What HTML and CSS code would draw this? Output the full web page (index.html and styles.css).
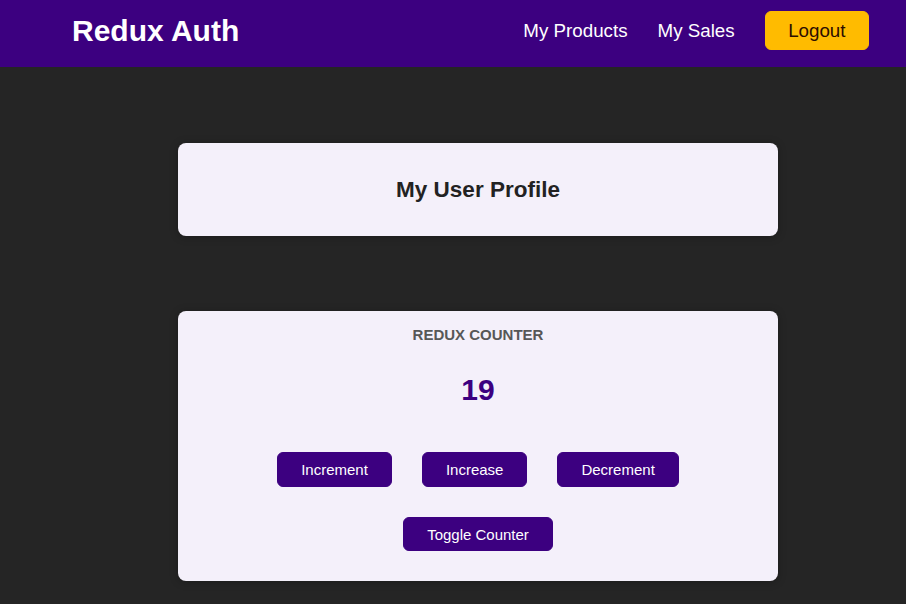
FILE: index.html
```html
<!DOCTYPE html>
<html lang="en">
<head>
<meta charset="utf-8">
<title>Redux Auth</title>
<link rel="stylesheet" href="styles.css">
</head>
<body>
<header class="header">
  <h1 class="brand">Redux Auth</h1>
  <nav class="nav">
    <ul class="nav-list">
      <li><a class="nav-link" href="#">My Products</a></li>
      <li><a class="nav-link" href="#">My Sales</a></li>
      <li><button class="logout">Logout</button></li>
    </ul>
  </nav>
</header>
<main class="main">
  <section class="card profile">
    <h2 class="profile-title">My User Profile</h2>
  </section>
  <section class="card counter">
    <h1 class="counter-title">Redux Counter</h1>
    <div class="value">19</div>
    <div class="actions">
      <button class="btn btn-row">Increment</button>
      <button class="btn btn-row">Increase</button>
      <button class="btn btn-row">Decrement</button>
    </div>
    <button class="btn btn-toggle">Toggle Counter</button>
  </section>
</main>
</body>
</html>
```
FILE: styles.css
```css
* { box-sizing: border-box; }

body {
  margin: 0;
  background: #252525;
  font-family: "Liberation Sans", Arial, sans-serif;
}

.header {
  height: 67px;
  background: #3c0080;
  display: flex;
  align-items: center;
  justify-content: space-between;
  padding: 0 37px 6px 72px;
}

.brand {
  margin: 0;
  color: #fff;
  font-size: 30px;
  font-weight: bold;
}

.nav-list {
  list-style: none;
  margin: 0;
  padding: 0;
  display: flex;
  align-items: center;
  gap: 30px;
}

.nav-link {
  color: #fff;
  text-decoration: none;
  font-size: 18.75px;
}

.logout {
  font-family: inherit;
  font-size: 18.75px;
  background: #ffbb00;
  color: #2c0d00;
  border: 1px solid #ffbb00;
  border-radius: 6px;
  padding: 7.5px 22.5px;
}

.main {
  padding: 76px 0 0 50px;
}

.card {
  width: 600px;
  margin: 0 auto 75px;
  background: #f4f0fa;
  border-radius: 8px;
  box-shadow: 0 1px 8px rgba(0, 0, 0, 0.25);
  text-align: center;
}

.profile {
  padding: 33px 0;
}

.profile-title {
  margin: 0;
  font-size: 22.5px;
  line-height: 27px;
  color: #222;
}

.counter {
  padding: 15px;
}

.counter-title {
  margin: 0;
  font-size: 15px;
  text-transform: uppercase;
  color: #575757;
}

.value {
  margin: 30px 0 45px;
  font-size: 30px;
  font-weight: bold;
  color: #3c0080;
}

.actions {
  display: flex;
  justify-content: center;
  gap: 30px;
  margin: 0 0 30px;
}

.btn {
  font-family: inherit;
  font-size: 15px;
  background: #3c0080;
  color: #fff;
  border: 1px solid #3c0080;
  border-radius: 6px;
  padding: 7.5px 23px;
}

.btn-row {
  padding: 8px 23px;
}

.btn-toggle {
  margin-bottom: 15px;
}
```
